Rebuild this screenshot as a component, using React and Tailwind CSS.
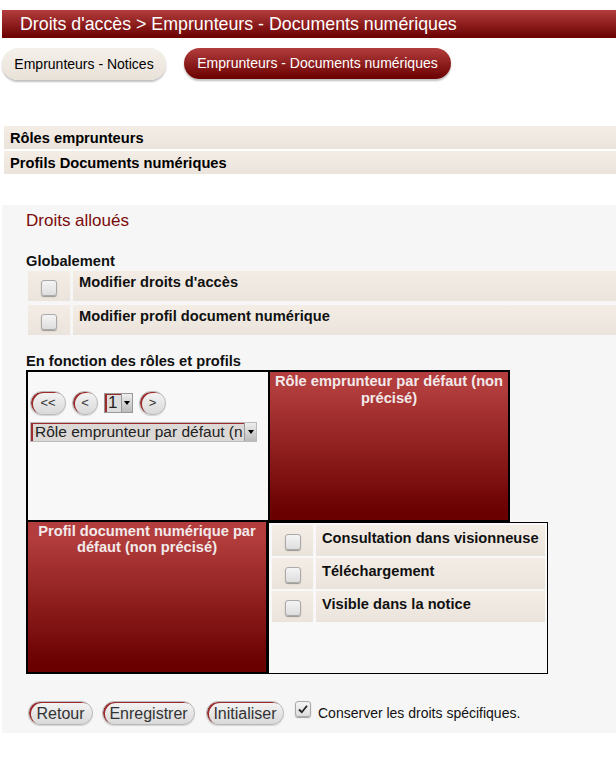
import React from 'react'

const font = { fontFamily: '"Liberation Sans", Arial, sans-serif' }

function Check({ checked }) {
  return (
    <span className="inline-flex h-[16px] w-[16px] items-center justify-center rounded-[3px] border border-[#a9a9a9] bg-[linear-gradient(#f4f4f4,#dedede)] shadow-[0_1px_1px_rgba(0,0,0,0.35)]">
      {checked && (
        <svg width="12" height="12" viewBox="0 0 12 12">
          <path d="M2 6.5 L4.8 9.2 L10 2.8" fill="none" stroke="#222" strokeWidth="1.8" />
        </svg>
      )}
    </span>
  )
}

function PillButton({ children, className = '' }) {
  return (
    <button className={`h-[24px] rounded-full border border-[#b9b9b9] bg-[linear-gradient(#f4f4f4,#d9d9d9)] text-[#333] shadow-[inset_2px_1px_0_#9c2b2b,0_1px_1px_rgba(0,0,0,0.15)] ${className}`}>
      {children}
    </button>
  )
}

function RightRow({ label }) {
  return (
    <div className="flex gap-[3px]">
      <div className="flex h-[31px] w-[41px] items-center justify-center bg-[linear-gradient(#f3ede5,#ebe4dc)] pt-[2px]">
        <Check />
      </div>
      <div className="flex-1 whitespace-nowrap bg-[linear-gradient(#f3ede5,#ebe4dc)] px-[6px] pt-[5px] text-[14.67px] font-bold leading-[17px] text-[#111]">
        {label}
      </div>
    </div>
  )
}

function GlobalRow({ label }) {
  return (
    <div className="flex gap-[3px]">
      <div className="flex h-[30px] w-[42px] items-center justify-center bg-[linear-gradient(#f3ede5,#ebe4dc)] pt-[4px]">
        <Check />
      </div>
      <div className="flex-1 bg-[linear-gradient(#f3ede5,#ebe4dc)] px-[6px] pt-[3px] text-[14.67px] font-bold leading-[17px] text-[#111]">
        {label}
      </div>
    </div>
  )
}

export default function App() {
  return (
    <div className="min-h-[759px] w-[616px] bg-white" style={font}>
      {/* titre */}
      <div className="ml-[2px] mt-[10px] flex h-[28px] items-center bg-[linear-gradient(#b33d3d,#6a0000)] pl-[18px] text-[17.8px] text-white">
        Droits d'accès &gt; Emprunteurs - Documents numériques
      </div>

      {/* onglets */}
      <div className="ml-[2px] mt-[10px] flex gap-[18px]">
        <div className="flex h-[32px] w-[164px] items-center justify-center rounded-[16px] bg-[linear-gradient(#f5f0ea,#e8e1d8)] text-[14px] text-black shadow-[0_2px_2px_rgba(0,0,0,0.25)]">
          Emprunteurs - Notices
        </div>
        <div className="flex h-[31px] w-[267px] items-center justify-center rounded-[16px] bg-[linear-gradient(#b33d3d,#6a0000)] text-[14px] text-white shadow-[0_2px_2px_rgba(0,0,0,0.25)]">
          Emprunteurs - Documents numériques
        </div>
      </div>

      {/* accordéons */}
      <div className="ml-[4px] mt-[46px] flex flex-col gap-[2px]">
        <div className="flex h-[23px] items-center bg-[linear-gradient(#f3ede5,#ebe4dc)] pl-[6px] text-[14.67px] font-bold text-black">
          Rôles emprunteurs
        </div>
        <div className="flex h-[23px] items-center bg-[linear-gradient(#f3ede5,#ebe4dc)] pl-[6px] text-[14.67px] font-bold text-black">
          Profils Documents numériques
        </div>
      </div>

      {/* panneau droits */}
      <div className="ml-[2px] mt-[31px] h-[528px] bg-[#f6f6f6] pl-[24px] pt-[4px]">
        <div className="pt-[2px] text-[17px] leading-[20px] text-[#7a0a0a]">Droits alloués</div>

        <div className="mt-[22px] text-[14.67px] font-bold leading-[17px] text-[#111]">Globalement</div>
        <div className="ml-[2px] mt-[1px] flex flex-col gap-[4px]">
          <GlobalRow label="Modifier droits d'accès" />
          <GlobalRow label="Modifier profil document numérique" />
        </div>

        <div className="mt-[18px] text-[14.67px] font-bold leading-[17px] text-[#111]">En fonction des rôles et profils</div>

        <div className="flex flex-col">
          {/* ligne 1 */}
          <div className="flex">
            <div className="h-[152px] w-[242px] border-y-2 border-l-2 border-black bg-[#f8f8f8] pl-[2px] pt-[19px]">
              <div className="flex items-center gap-[6px]">
                <PillButton className="w-[36px] text-[13px]">&lt;&lt;</PillButton>
                <PillButton className="w-[26px] text-[13px]">&lt;</PillButton>
                <div className="flex h-[20px] w-[29px] items-center border border-[#999] bg-[#ddd] shadow-[inset_2px_1px_0_#9c2b2b]">
                  <span className="flex-1 pl-[3px] text-[17px] leading-[18px] text-[#222]">1</span>
                  <span className="flex h-[18px] w-[11px] items-center justify-center border-l border-[#999] bg-[linear-gradient(#eee,#bbb)]">
                    <svg width="6" height="4" viewBox="0 0 6 4"><path d="M0 0 H6 L3 4 Z" fill="#000" /></svg>
                  </span>
                </div>
                <PillButton className="w-[27px] text-[13px]">&gt;</PillButton>
              </div>
              <div className="mt-[7px] flex h-[20px] w-[227px] items-center overflow-hidden border border-[#bbb] bg-[#dcd8d6] shadow-[inset_2px_1px_0_#9c2b2b]">
                <span className="flex-1 overflow-hidden whitespace-nowrap pl-[4px] text-[15.5px] leading-[18px] text-[#222]">
                  Rôle emprunteur par défaut (n
                </span>
                <span className="flex h-[18px] w-[12px] shrink-0 items-center justify-center border-l border-[#999] bg-[linear-gradient(#eee,#bbb)]">
                  <svg width="6" height="4" viewBox="0 0 6 4"><path d="M0 0 H6 L3 4 Z" fill="#000" /></svg>
                </span>
              </div>
            </div>
            <div className="h-[152px] w-[242px] border-2 border-black bg-[linear-gradient(#b33d3d_10%,#6a0000_95%)] px-[2px] pt-[1px] text-center text-[14.67px] font-bold leading-[17px] text-[#f2eaea]">
              Rôle emprunteur par défaut (non précisé)
            </div>
          </div>

          {/* ligne 2 */}
          <div className="flex">
            <div className="h-[152px] w-[242px] border-x-2 border-b-2 border-black bg-[linear-gradient(#b33d3d_10%,#6a0000_95%)] px-[6px] pt-[1px] text-center text-[14.67px] font-bold leading-[16px] text-[#f2eaea]">
              Profil document numérique par défaut (non précisé)
            </div>
            <div className="h-[152px] w-[280px] border border-black bg-[#f8f8f8] py-[2px] pl-[3px] pr-[2px]">
              <div className="flex flex-col gap-[2px]">
                <RightRow label="Consultation dans visionneuse" />
                <RightRow label="Téléchargement" />
                <RightRow label="Visible dans la notice" />
              </div>
            </div>
          </div>
        </div>

        {/* actions */}
        <div className="mt-[27px] flex items-center">
          <PillButton className="ml-[2px] w-[65px] text-[16px]">Retour</PillButton>
          <PillButton className="ml-[9px] w-[93px] text-[16px]">Enregistrer</PillButton>
          <PillButton className="ml-[11px] w-[78px] text-[16px]">Initialiser</PillButton>
          <span className="-mt-[6px] ml-[11px]"><Check checked /></span>
          <span className="ml-[7px] text-[14px] text-[#111]">Conserver les droits spécifiques.</span>
        </div>
      </div>
    </div>
  )
}
